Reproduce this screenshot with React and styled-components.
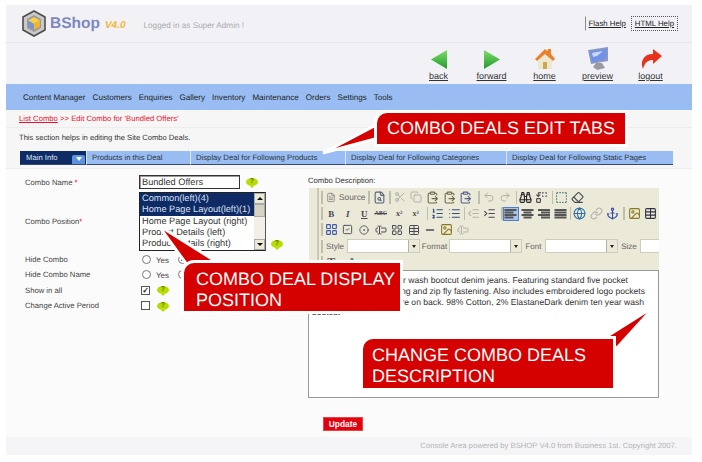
import styled, { createGlobalStyle } from "styled-components";
import {
  Scissors,
  Copy,
  ClipboardPaste,
  Undo2,
  Redo2,
  Binoculars,
  Replace,
  Eraser,
  FileSearch,
  ListOrdered,
  List,
  IndentDecrease,
  IndentIncrease,
  Globe,
  Link,
  Anchor,
  Image,
  Table,
  FileText,
  SquareCheck,
  CircleDot,
  TextCursorInput,
  LayoutGrid,
  Minus,
  SquareDashed,
} from "lucide-react";

const GlobalStyle = createGlobalStyle`
  html, body { margin: 0; background: #fff; }
  body {
    font-family: "Liberation Sans", Arial, sans-serif;
    color: #333;
    text-rendering: geometricPrecision;
  }
`;

const Page = styled.div`
  position: relative;
  width: 686px;
  height: 450px;
  margin: 5px 0 0 6px;
  background: #fbfbfb;
  display: flex;
  flex-direction: column;
`;

const TopBar = styled.header`
  height: 37px;
  flex: none;
  background: #f2f2f6;
  border-bottom: 1px solid #e6e6ea;
  display: flex;
  align-items: center;
  padding: 0 14px 0 16px;
`;

const Brand = styled.div`
  display: flex;
  align-items: center;
  gap: 4px;
`;

const BrandName = styled.span`
  font: bold 15.5px "Liberation Sans", sans-serif;
  color: #7d88bf;
`;

const BrandVersion = styled.span`
  font: italic bold 10px "Liberation Sans", sans-serif;
  color: #f2b632;
  margin-left: 1px;
  margin-top: 3px;
`;

const LoggedIn = styled.span`
  font-size: 8.2px;
  color: #a9a9ad;
  margin: 3px 0 0 18px;
`;

const HelpLinks = styled.nav`
  margin-left: auto;
  margin-top: -1px;
  display: flex;
  align-items: center;
  font-size: 7.8px;
  color: #222;
`;

const HelpLink = styled.a`
  text-decoration: underline;
  padding: 2px 3px;
  height: 9px;
  line-height: 9px;
  border: 1px ${(p) => (p.$focus ? "dotted #555" : "solid transparent")};
  border-left: 1px ${(p) => (p.$focus ? "dotted #555" : "solid #888")};
  margin-left: ${(p) => (p.$focus ? "1px" : "0")};
`;

const IconBar = styled.div`
  height: 41px;
  flex: none;
  background: #f2f2f6;
  display: flex;
  justify-content: flex-end;
  padding-right: 15px;
`;

const IconLink = styled.a`
  width: 53px;
  display: flex;
  flex-direction: column;
  align-items: center;
  justify-content: flex-end;
  font-size: 9px;
  line-height: 11px;
  color: #333;
  text-decoration: underline;
  padding-bottom: 2px;
  svg { display: block; margin-bottom: 1px; }
`;

const MainNav = styled.nav`
  height: 26px;
  flex: none;
  background: #99bdf3;
  display: flex;
  align-items: center;
  gap: 7px;
  padding-left: 17px;
  font-size: 8.1px;
  color: #222;
`;

const Crumbs = styled.div`
  height: 17px;
  flex: none;
  background: #f6f6f6;
  border-bottom: 1px solid #ededed;
  padding-left: 13px;
  font-size: 7.7px;
  line-height: 18px;
  color: #e8112d;
  a { text-decoration: underline; }
`;

const Intro = styled.div`
  height: 20px;
  flex: none;
  background: #f6f6f6;
  padding-left: 13px;
  font-size: 7.6px;
  line-height: 19px;
  color: #333;
`;

const TabStrip = styled.div`
  flex: none;
  background: #f6f6f6;
  padding: 3px 0 3px 14px;
  border-bottom: 1px solid #eee;
  display: flex;
`;

const Tab = styled.div`
  width: ${(p) => p.$width}px;
  height: 13px;
  flex: none;
  box-sizing: content-box;
  background: ${(p) => (p.$active ? "#0f2b66" : "#99bdf3")};
  color: ${(p) => (p.$active ? "#dfe6f5" : "#2b3440")};
  border-bottom: 1px solid #3c4a66;
  border-left: 1px solid ${(p) => (p.$active ? "#0f2b66" : "#dfe6f5")};
  font-size: 7.7px;
  line-height: 13px;
  padding-left: 5px;
  display: flex;
  align-items: center;
  justify-content: space-between;
`;

const TabCaret = styled.span`
  width: 13px;
  height: 9px;
  margin: 3px 1px 0 0;
  border-radius: 2px 2px 0 0;
  background: #5b93de;
  display: flex;
  justify-content: center;
  align-items: center;
  &::after {
    content: "";
    border: 3px solid transparent;
    border-top: 4px solid #fff;
    border-bottom: 0;
  }
`;

const Columns = styled.main`
  flex: none;
  height: 231px;
  display: flex;
  padding: 4px 0 0 19px;
`;

const FormCol = styled.div`
  width: 283px;
  flex: none;
  display: flex;
  flex-direction: column;
`;

const FormRow = styled.div`
  display: grid;
  grid-template-columns: 114px 1fr;
  align-items: center;
  height: ${(p) => p.$h}px;
  margin-top: ${(p) => p.$mt || 0}px;
  font-size: 7.7px;
  color: #444;
`;

const Req = styled.span`
  color: #e8112d;
`;

const Field = styled.div`
  display: flex;
  align-items: center;
  gap: ${(p) => p.$gap ?? 6}px;
`;

const TextBox = styled.div`
  width: 97px;
  height: 12px;
  border: 1px solid #333;
  box-shadow: inset 1px 1px 0 #999;
  padding-left: 2px;
  font-size: 9.2px;
  line-height: 13px;
  color: #333;
  background: #fff;
`;

const HelpBubble = styled.span`
  position: relative;
  width: 12px;
  height: 8px;
  flex: none;
  margin-bottom: ${(p) => p.$mb || 0}px;
  border-radius: 50%;
  background: #b7dc00;
  font: bold 7px/8px "Liberation Sans", sans-serif;
  color: #5d7000;
  text-align: center;
  &::after {
    content: "";
    position: absolute;
    left: 4px;
    bottom: -2px;
    border: 2px solid transparent;
    border-top: 2px solid #b7dc00;
    border-bottom: 0;
  }
`;

const ListWrap = styled.div`
  display: flex;
  align-items: flex-end;
  gap: 5px;
`;

const ListBox = styled.div`
  width: 125px;
  height: 57px;
  border: 1px solid #222;
  border-right-color: #555;
  background: #fff;
  display: flex;
`;

const ListItems = styled.div`
  flex: 1;
  font-size: 9.2px;
  line-height: 11.3px;
  overflow: hidden;
`;

const ListItem = styled.div`
  padding-left: 2px;
  white-space: nowrap;
  background: ${(p) => (p.$selected ? "#0f2b66" : "#fff")};
  color: ${(p) => (p.$selected ? "#d8e0f2" : "#333")};
`;

const ScrollTrack = styled.div`
  width: 11px;
  background: #f1efe6;
  display: flex;
  flex-direction: column;
`;

const ScrollBtn = styled.div`
  height: 11px;
  background: #ece9d8;
  border: 1px solid #aaa;
  box-sizing: border-box;
  display: flex;
  justify-content: center;
  align-items: center;
  &::after {
    content: "";
    border: 3px solid transparent;
    ${(p) => (p.$up ? "border-bottom: 3px solid #111; border-top: 0;" : "border-top: 3px solid #111; border-bottom: 0;")}
  }
`;

const ScrollThumb = styled.div`
  height: 13px;
  background: #d6d3c6;
  border: 1px solid #aaa;
  box-sizing: border-box;
  margin-bottom: auto;
`;

const Radio = styled.span`
  width: 7px;
  height: 7px;
  border: 1px solid #777;
  border-radius: 50%;
  background: #fff;
  margin-left: ${(p) => p.$offset || 0}px;
  display: flex;
  justify-content: center;
  align-items: center;
  &::after {
    content: "";
    width: 3px;
    height: 3px;
    border-radius: 50%;
    background: ${(p) => (p.$on ? "#111" : "transparent")};
  }
`;

const RadioLabel = styled.span`
  font-size: 8px;
  color: #444;
  margin-left: -1px;
  margin-top: 2px;
`;

const CheckBox = styled.span`
  width: 7px;
  height: 7px;
  margin-left: 2px;
  border: 1px solid #555;
  background: #fff;
  font: bold 8px/7px "Liberation Sans", sans-serif;
  color: #111;
  text-align: center;
`;

const DescCol = styled.div`
  width: 351px;
  flex: none;
  margin-top: 1px;
`;

const DescLabel = styled.div`
  font-size: 7.7px;
  height: 14px;
  line-height: 13px;
  color: #333;
`;

const Editor = styled.div`
  margin-left: 1px;
  width: 350px;
  height: 82px;
  background: #ebe9d8;
  overflow: hidden;
  position: relative;
  padding: 1px 0 0 12px;
  box-sizing: border-box;
  &::before {
    content: "";
    position: absolute;
    left: 8px;
    top: 0;
    bottom: 0;
    width: 2px;
    background: #c9c7b5;
  }
`;

const ToolRow = styled.div`
  height: 16.4px;
  display: flex;
  align-items: center;
  white-space: nowrap;
  font-size: 8px;
  color: #555;
`;

const Sep = styled.span`
  width: 1.5px;
  height: 13px;
  flex: none;
  background: #c0bdaa;
  margin: 0 ${(p) => p.$after ?? 1.5}px 0 ${(p) => p.$before ?? 2.5}px;
`;

const LeadSep = styled(Sep)`
  margin: 0 0.5px 0 0;
`;

const Tool = styled.span`
  width: 16.5px;
  height: 14px;
  flex: none;
  box-sizing: border-box;
  display: flex;
  align-items: center;
  justify-content: center;
  color: ${(p) => (p.$off ? "#b3b1a6" : p.$color || "#4a4a55")};
  font: ${(p) => (p.$text ? `bold ${p.$size || 9}px 'Liberation Serif', serif` : "inherit")};
  background: ${(p) => (p.$active ? "#a9c4ea" : "transparent")};
  border: 1px solid ${(p) => (p.$active ? "#4f7fc4" : "transparent")};
  margin-left: ${(p) => p.$ml || 0}px;
  sub, sup { font-size: 5px; }
`;

const SourceTool = styled.span`
  width: 42.5px;
  flex: none;
  display: flex;
  align-items: center;
  gap: 3px;
  padding-left: 3px;
  box-sizing: border-box;
  font-size: 8.4px;
  color: #666;
`;

const ComboLabel = styled.span`
  width: ${(p) => p.$w}px;
  flex: none;
  text-align: center;
  color: #666;
`;

const Combo = styled.span`
  width: 71px;
  height: 12px;
  flex: none;
  background: #fff;
  border: 1px solid #cfcdbd;
  display: flex;
  justify-content: flex-end;
`;

const ComboCaret = styled.span`
  width: 10px;
  background: #ebe9d8;
  border-left: 1px solid #b5b3a3;
  display: flex;
  justify-content: center;
  align-items: center;
  &::after {
    content: "";
    border: 2.5px solid transparent;
    border-top: 3px solid #222;
    border-bottom: 0;
  }
`;

const EditArea = styled.div`
  width: 351px;
  height: 128px;
  box-sizing: border-box;
  border: 1px solid #999;
  background: #fff;
  padding: 4px 0 0 3px;
  font-size: 8.6px;
  line-height: 10.8px;
  color: #333;
  white-space: nowrap;
`;

const EditLine = styled.div`
  width: ${(p) => (p.$end ? `${p.$end}px` : "auto")};
  display: flex;
  justify-content: ${(p) => (p.$end ? "flex-end" : "flex-start")};
`;

const ActionBar = styled.div`
  flex: 1;
  display: flex;
  justify-content: center;
  padding: 13px 12px 0 0;
`;

const UpdateBtn = styled.button`
  width: 40px;
  height: 14px;
  padding: 0;
  border: 1px solid #f04040;
  background: #e1000f;
  color: #fff;
  font: bold 8.4px "Liberation Sans", sans-serif;
`;

const Footer = styled.footer`
  height: 18px;
  flex: none;
  background: #f5f4f6;
  text-align: right;
  padding-right: 15px;
  font-size: 7.7px;
  line-height: 17px;
  color: #b4b4b6;
`;

const Callout = styled.div`
  position: absolute;
  left: ${(p) => p.$x}px;
  top: ${(p) => p.$y}px;
  width: ${(p) => p.$w}px;
  height: ${(p) => p.$h}px;
`;

const CalloutBox = styled.div`
  position: relative;
  box-sizing: border-box;
  width: 100%;
  height: 100%;
  background: #d50000;
  color: #fff;
  box-shadow: 0 0 0 3px #fff;
  border-top-left-radius: 10px;
  padding: ${(p) => p.$pad};
  font-size: 18px;
  line-height: 21px;
`;

const CalloutTail = styled.svg`
  position: absolute;
  left: 0;
  top: 0;
  overflow: visible;
`;

function Logo() {
  return (
    <svg width="24" height="27" viewBox="0 0 24 27">
      <path d="M12 1 23 7v13l-11 6L1 20V7z" fill="#c9c9c9" stroke="#4d4d4d" strokeWidth="1.6" />
      <path d="M12 5 19 9v9l-7 4-7-4V9z" fill="#9a9a9a" />
      <path d="M12 7 18 10.5 12 14 6 10.5z" fill="#f6cf45" />
      <path d="M6 10.5 12 14v6l-6-3.5z" fill="#7f92cf" />
      <path d="M18 10.5 12 14v6l6-3.5z" fill="#eeb52d" />
    </svg>
  );
}

function NavIcon({ kind }) {
  if (kind === "back" || kind === "forward") {
    const id = `grad-${kind}`;
    return (
      <svg width="18" height="21" viewBox="0 0 18 21">
        <defs>
          <linearGradient id={id} x1="0" y1="0" x2="0" y2="1">
            <stop offset="0" stopColor="#7fdc6a" />
            <stop offset="1" stopColor="#1f9a2c" />
          </linearGradient>
        </defs>
        <path d={kind === "back" ? "M17 1v19L1 10.5z" : "M1 1v19l16-9.5z"} fill={`url(#${id})`} />
      </svg>
    );
  }
  if (kind === "home") {
    return (
      <svg width="20" height="22" viewBox="0 0 20 22">
        <path d="M3 11 10 5l7 6v10H3z" fill="#eee7d0" />
        <path d="M8 14h4v7H8z" fill="#c9a94f" />
        <path d="M0 11 10 1l2 2 1-2h3v5l4 5-2 2-8-7-8 7z" fill="#e9812b" />
      </svg>
    );
  }
  if (kind === "preview") {
    return (
      <svg width="22" height="23" viewBox="0 0 22 23">
        <path d="M1 3 21 0v14L4 17z" fill="#8a97c4" />
        <path d="M3 5 19 2v10L5 15z" fill="#6f92e8" />
        <path d="M5 6 16 4l-6 5-4 1z" fill="#c9d9fa" />
        <path d="M9 16h6l3 5-8 2-4-3z" fill="#9a9aa3" />
      </svg>
    );
  }
  return (
    <svg width="22" height="21" viewBox="0 0 22 21">
      <path d="M13 0 22 7l-9 8v-4C8 11 5 13 3 20 0 13 3 5 13 5z" fill="#e8321c" />
    </svg>
  );
}

const AlignIcon = ({ mode }) => {
  const rows = mode === "left" ? [12, 9, 12, 9] : mode === "center" ? [12, 8, 12, 8] : mode === "right" ? [12, 9, 12, 9] : [12, 12, 12, 12];
  return (
    <svg width="13" height="11" viewBox="0 0 13 11">
      {rows.map((w, i) => {
        const x = mode === "center" ? (13 - w) / 2 : mode === "right" ? 13 - w : 0.5;
        return <rect key={i} x={x} y={1 + i * 2.5} width={w} height="2" fill="#555" />;
      })}
    </svg>
  );
};

function Toolbar() {
  return (
    <Editor>
      <ToolRow>
        <LeadSep />
        <SourceTool>
          <FileText size={11} strokeWidth={1.5} />
          Source
        </SourceTool>
        <Sep />
        <Tool $color="#54627a"><FileSearch size={13} /></Tool>
        <Sep $before={1.5} $after={1} />
        <Tool $off><Scissors size={12} /></Tool>
        <Tool $off><Copy size={12} /></Tool>
        <Tool $color="#6d6a45"><ClipboardPaste size={13} /></Tool>
        <Tool $color="#6d6a45"><ClipboardPaste size={13} /></Tool>
        <Tool $color="#55608a"><ClipboardPaste size={13} /></Tool>
        <Sep $before={4} $after={1} />
        <Tool $off><Undo2 size={12} /></Tool>
        <Tool $off><Redo2 size={12} /></Tool>
        <Sep $before={2} $after={0} />
        <Tool $color="#222"><Binoculars size={13} /></Tool>
        <Tool><Replace size={13} /></Tool>
        <Sep $before={1.5} $after={0} />
        <Tool $color="#4a7a78"><SquareDashed size={13} /></Tool>
        <Tool><Eraser size={13} /></Tool>
      </ToolRow>
      <ToolRow>
        <LeadSep />
        <Tool $text><b>B</b></Tool>
        <Tool $text><i>I</i></Tool>
        <Tool $text><u>U</u></Tool>
        <Tool $text $size={6}><s>ABC</s></Tool>
        <Tool $text $size={8} $ml={2}>x<sub>2</sub></Tool>
        <Tool $text $size={8}>x<sup>2</sup></Tool>
        <Sep />
        <Tool $color="#34507a"><ListOrdered size={13} /></Tool>
        <Tool $color="#34507a"><List size={13} /></Tool>
        <Sep $before={1} $after={0} />
        <Tool $off><IndentDecrease size={13} /></Tool>
        <Tool><IndentIncrease size={13} /></Tool>
        <Sep $before={3} $after={0} />
        <Tool $active><AlignIcon mode="left" /></Tool>
        <Tool><AlignIcon mode="center" /></Tool>
        <Tool><AlignIcon mode="right" /></Tool>
        <Tool><AlignIcon mode="justify" /></Tool>
        <Sep $before={1} $after={0.5} />
        <Tool $color="#2f6ea5"><Globe size={13} /></Tool>
        <Tool $off><Link size={13} /></Tool>
        <Tool $color="#3448a8"><Anchor size={13} /></Tool>
        <Sep $before={2} />
        <Tool $color="#8a7a1c"><Image size={13} /></Tool>
        <Tool $color="#334"><Table size={13} /></Tool>
      </ToolRow>
      <ToolRow>
        <LeadSep />
        <Tool $color="#3b55b0"><LayoutGrid size={13} /></Tool>
        <Tool><SquareCheck size={11} /></Tool>
        <Tool><CircleDot size={10} /></Tool>
        <Tool><TextCursorInput size={12} /></Tool>
        <Tool><LayoutGrid size={12} /></Tool>
        <Tool><Table size={12} /></Tool>
        <Tool><Minus size={12} strokeWidth={3} /></Tool>
        <Tool $color="#8a7a1c"><Image size={13} /></Tool>
        <Tool $off><TextCursorInput size={12} /></Tool>
      </ToolRow>
      <ToolRow>
        <LeadSep />
        <ComboLabel $w={24}>Style</ComboLabel>
        <Combo><ComboCaret /></Combo>
        <ComboLabel $w={29}>Format</ComboLabel>
        <Combo><ComboCaret /></Combo>
        <ComboLabel $w={23}>Font</ComboLabel>
        <Combo><ComboCaret /></Combo>
        <ComboLabel $w={22}>Size</ComboLabel>
        <Combo />
      </ToolRow>
      <ToolRow>
        <LeadSep />
        <Tool $text $size={12}>T</Tool>
        <Tool $text $size={12} $ml={4} $color="#4a7a78">A</Tool>
      </ToolRow>
    </Editor>
  );
}

const navItems = ["Content Manager", "Customers", "Enquiries", "Gallery", "Inventory", "Maintenance", "Orders", "Settings", "Tools"];
const iconLinks = ["back", "forward", "home", "preview", "logout"];
const positions = [
  { label: "Common(left)(4)", selected: true },
  { label: "Home Page Layout(left)(1)", selected: true },
  { label: "Home Page Layout (right)" },
  { label: "Product Details (left)" },
  { label: "Product Details (right)" },
];

export default function App() {
  return (
    <>
      <GlobalStyle />
      <Page>
        <TopBar>
          <Brand>
            <Logo />
            <BrandName>BShop</BrandName>
            <BrandVersion>V4.0</BrandVersion>
          </Brand>
          <LoggedIn>Logged in as Super Admin !</LoggedIn>
          <HelpLinks>
            <HelpLink>Flash Help</HelpLink>
            <HelpLink $focus>HTML Help</HelpLink>
          </HelpLinks>
        </TopBar>
        <IconBar>
          {iconLinks.map((name) => (
            <IconLink key={name}>
              <NavIcon kind={name} />
              {name}
            </IconLink>
          ))}
        </IconBar>
        <MainNav>
          {navItems.map((item) => (
            <span key={item}>{item}</span>
          ))}
        </MainNav>
        <Crumbs>
          <a>List Combo</a> &gt;&gt; Edit Combo for 'Bundled Offers'
        </Crumbs>
        <Intro>This section helps in editing the Site Combo Deals.</Intro>
        <TabStrip>
          <Tab $active $width={60}>Main Info<TabCaret /></Tab>
          <Tab $width={98}>Products in this Deal</Tab>
          <Tab $width={149}>Display Deal for Following Products</Tab>
          <Tab $width={155}>Display Deal for Following Categories</Tab>
          <Tab $width={161}>Display Deal for Following Static Pages</Tab>
        </TabStrip>
        <Columns>
          <FormCol>
            <FormRow $h={18}>
              <span>Combo Name <Req>*</Req></span>
              <Field>
                <TextBox>Bundled Offers</TextBox>
                <HelpBubble>?</HelpBubble>
              </Field>
            </FormRow>
            <FormRow $h={59} $mt={1}>
              <span>Combo Position<Req>*</Req></span>
              <ListWrap>
                <ListBox>
                  <ListItems>
                    {positions.map((p) => (
                      <ListItem key={p.label} $selected={p.selected}>{p.label}</ListItem>
                    ))}
                  </ListItems>
                  <ScrollTrack>
                    <ScrollBtn $up />
                    <ScrollThumb />
                    <ScrollBtn />
                  </ScrollTrack>
                </ListBox>
                <HelpBubble $mb={3}>?</HelpBubble>
              </ListWrap>
            </FormRow>
            <FormRow $h={16}>
              <span>Hide Combo</span>
              <Field>
                <Radio $offset={3} />
                <RadioLabel>Yes</RadioLabel>
                <Radio $offset={3} $on />
              </Field>
            </FormRow>
            <FormRow $h={15.5}>
              <span>Hide Combo Name</span>
              <Field>
                <Radio $offset={3} />
                <RadioLabel>Yes</RadioLabel>
                <Radio $offset={3} $on />
              </Field>
            </FormRow>
            <FormRow $h={15.5}>
              <span>Show in all</span>
              <Field $gap={7}>
                <CheckBox>✓</CheckBox>
                <HelpBubble>?</HelpBubble>
              </Field>
            </FormRow>
            <FormRow $h={15.5}>
              <span>Change Active Period</span>
              <Field $gap={7}>
                <CheckBox />
                <HelpBubble>?</HelpBubble>
              </Field>
            </FormRow>
          </FormCol>
          <DescCol>
            <DescLabel>Combo Description:</DescLabel>
            <Toolbar />
            <EditArea>
              <EditLine $end={316}>Dark denim ten year wash bootcut denim jeans. Featuring standard five pocket</EditLine>
              <EditLine $end={333}>styling and zip fly fastening. Also includes embroidered logo pockets</EditLine>
              <EditLine $end={332}>with signature on back. 98% Cotton, 2% ElastaneDark denim ten year wash</EditLine>
              <EditLine>bootcut</EditLine>
            </EditArea>
          </DescCol>
        </Columns>
        <ActionBar>
          <UpdateBtn>Update</UpdateBtn>
        </ActionBar>
        <Footer>Console Area powered by BSHOP V4.0 from Business 1st. Copyright 2007.</Footer>

        <Callout $x={371} $y={108} $w={248} $h={31}>
          <CalloutTail width="1" height="1">
            <path d="M3 10-54 40-2 26z" fill="#d50000" stroke="#fff" strokeWidth="3" />
          </CalloutTail>
          <CalloutBox $pad="5px 0 0 10px">COMBO DEALS EDIT TABS</CalloutBox>
        </Callout>
        <Callout $x={178} $y={258} $w={216} $h={48}>
          <CalloutTail width="1" height="1">
            <path d="M-26-38 36 1 6 6z" fill="#d50000" stroke="#fff" strokeWidth="3" />
          </CalloutTail>
          <CalloutBox $pad="6px 0 0 12px">COMBO DEAL DISPLAY<br />POSITION</CalloutBox>
        </Callout>
        <Callout $x={357} $y={334} $w={250} $h={49}>
          <CalloutTail width="1" height="1">
            <path d="M292-33 238 1 250 3 253 10z" fill="#d50000" stroke="#fff" strokeWidth="3" />
          </CalloutTail>
          <CalloutBox $pad="6px 0 0 9px">CHANGE COMBO DEALS<br />DESCRIPTION</CalloutBox>
        </Callout>
      </Page>
    </>
  );
}
